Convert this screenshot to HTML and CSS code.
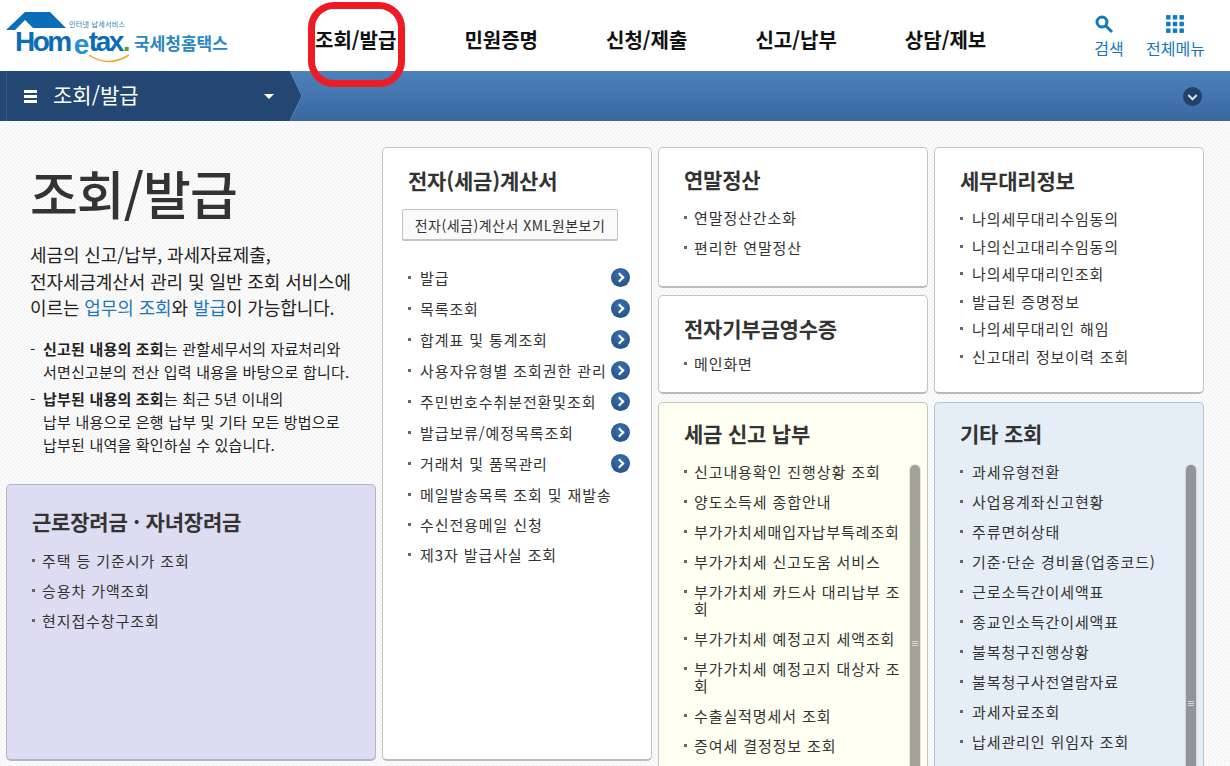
FILE: index.html
```html
<!DOCTYPE html>
<html lang="ko">
<head>
    <meta charset="UTF-8">
    <meta name="viewport" content="width=device-width, initial-scale=1.0">
    <title>조회/발급 - 국세청홈택스</title>
    <link rel="stylesheet" href="styles.css">
</head>
<body>
    <header class="header">
        <a class="logo" href="#">
            <svg class="logo-house" width="62" height="20" viewBox="0 0 62 20">
                <path d="M0 18 L19 0 H44 L60 16 H27 L19 8 L9 18 Z" fill="#0a6db5"/>
            </svg>
            <span class="logo-small">인터넷 납세서비스</span>
            <span class="logo-word">Hom<em>e</em>tax<i>.</i></span>
            <svg class="logo-smile" width="42" height="10" viewBox="0 0 42 10">
                <path d="M1 1 Q20 14 41 1" fill="none" stroke="#f0a531" stroke-width="1.5"/>
            </svg>
            <span class="logo-name">국세청홈택스</span>
        </a>
        <nav class="gnb">
            <a href="#">조회/발급</a>
            <a href="#">민원증명</a>
            <a href="#">신청/제출</a>
            <a href="#">신고/납부</a>
            <a href="#">상담/제보</a>
        </nav>
        <div class="tools">
            <a href="#">
                <svg class="tool-search" width="20" height="20" viewBox="0 0 20 20">
                    <circle cx="8" cy="8" r="5" fill="none" stroke="#1478bd" stroke-width="3"/>
                    <path d="M12 12 L18 18" stroke="#1478bd" stroke-width="3"/>
                </svg>
                검색
            </a>
            <a href="#">
                <svg width="20" height="20" viewBox="0 0 18 18" fill="#1478bd">
                    <rect x="1" y="1" width="4" height="4"/><rect x="7" y="1" width="4" height="4"/><rect x="13" y="1" width="4" height="4"/>
                    <rect x="1" y="7" width="4" height="4"/><rect x="7" y="7" width="4" height="4"/><rect x="13" y="7" width="4" height="4"/>
                    <rect x="1" y="13" width="4" height="4"/><rect x="7" y="13" width="4" height="4"/><rect x="13" y="13" width="4" height="4"/>
                </svg>
                전체메뉴
            </a>
        </div>
    </header>
    <div class="highlight"></div>

    <div class="locbar">
        <div class="loc-current">
            <span class="loc-burger"><i></i><i></i><i></i></span>
            <span class="loc-title">조회/발급</span>
            <span class="loc-caret"></span>
        </div>
        <svg class="loc-tip" width="13" height="50" viewBox="0 0 13 50">
            <path d="M0 0 L12 25 L0 50 Z" fill="#234673"/>
            <path d="M0 0 L12 25 L0 50" fill="none" stroke="#5b87bc" stroke-width="1"/>
        </svg>
        <span class="loc-more">
            <svg width="19" height="19" viewBox="0 0 18 18">
                <circle cx="9" cy="9" r="9" fill="#22406a"/>
                <path d="M5 7.5 L9 11.5 L13 7.5" fill="none" stroke="#d5dde6" stroke-width="2"/>
            </svg>
        </span>
    </div>

    <main class="content">
        <section class="intro-col">
            <div class="intro">
                <h1>조회/발급</h1>
                <p class="lead">세금의 신고/납부, 과세자료제출,<br>전자세금계산서 관리 및 일반 조회 서비스에<br>이르는 <span class="blue">업무의 조회</span>와 <span class="blue">발급</span>이 가능합니다.</p>
                <ul class="notes">
                    <li><b>신고된 내용의 조회</b>는 관할세무서의 자료처리와<br>서면신고분의 전산 입력 내용을 바탕으로 합니다.</li>
                    <li><b>납부된 내용의 조회</b>는 최근 5년 이내의<br>납부 내용으로 은행 납부 및 기타 모든 방법으로<br>납부된 내역을 확인하실 수 있습니다.</li>
                </ul>
            </div>
            <div class="card card-violet">
                <h2>근로장려금 · 자녀장려금</h2>
                <ul class="links">
                    <li>주택 등 기준시가 조회</li>
                    <li>승용차 가액조회</li>
                    <li>현지접수창구조회</li>
                </ul>
            </div>
        </section>

        <section class="card card-tall">
            <h2>전자(세금)계산서</h2>
            <button class="xml-btn" type="button">전자(세금)계산서 XML원본보기</button>
            <ul class="links links-arrow">
                <li class="has-arrow">발급<span class="arrow"></span></li>
                <li class="has-arrow">목록조회<span class="arrow"></span></li>
                <li class="has-arrow">합계표 및 통계조회<span class="arrow"></span></li>
                <li class="has-arrow">사용자유형별 조회권한 관리<span class="arrow"></span></li>
                <li class="has-arrow">주민번호수취분전환및조회<span class="arrow"></span></li>
                <li class="has-arrow">발급보류/예정목록조회<span class="arrow"></span></li>
                <li class="has-arrow">거래처 및 품목관리<span class="arrow"></span></li>
                <li>메일발송목록 조회 및 재발송</li>
                <li>수신전용메일 신청</li>
                <li>제3자 발급사실 조회</li>
            </ul>
        </section>

        <section class="stack">
            <div class="card card-year">
                <h2>연말정산</h2>
                <ul class="links">
                    <li>연말정산간소화</li>
                    <li>편리한 연말정산</li>
                </ul>
            </div>
            <div class="card card-donate">
                <h2>전자기부금영수증</h2>
                <ul class="links">
                    <li>메인화면</li>
                </ul>
            </div>
            <div class="card card-yellow">
                <h2>세금 신고 납부</h2>
                <ul class="links">
                    <li>신고내용확인 진행상황 조회</li>
                    <li>양도소득세 종합안내</li>
                    <li>부가가치세매입자납부특례조회</li>
                    <li>부가가치세 신고도움 서비스</li>
                    <li>부가가치세 카드사 대리납부 조회</li>
                    <li>부가가치세 예정고지 세액조회</li>
                    <li>부가가치세 예정고지 대상자 조회</li>
                    <li>수출실적명세서 조회</li>
                    <li>증여세 결정정보 조회</li>
                </ul>
                <div class="scroll-thumb"><span></span></div>
            </div>
        </section>

        <section class="stack">
            <div class="card card-agent">
                <h2>세무대리정보</h2>
                <ul class="links links-tight">
                    <li>나의세무대리수임동의</li>
                    <li>나의신고대리수임동의</li>
                    <li>나의세무대리인조회</li>
                    <li>발급된 증명정보</li>
                    <li>나의세무대리인 해임</li>
                    <li>신고대리 정보이력 조회</li>
                </ul>
            </div>
            <div class="card card-blue">
                <h2>기타 조회</h2>
                <ul class="links">
                    <li>과세유형전환</li>
                    <li>사업용계좌신고현황</li>
                    <li>주류면허상태</li>
                    <li>기준·단순 경비율(업종코드)</li>
                    <li>근로소득간이세액표</li>
                    <li>종교인소득간이세액표</li>
                    <li>불복청구진행상황</li>
                    <li>불복청구사전열람자료</li>
                    <li>과세자료조회</li>
                    <li>납세관리인 위임자 조회</li>
                </ul>
                <div class="scroll-thumb"><span></span></div>
            </div>
        </section>
    </main>
</body>
</html>
```

FILE: styles.css
```css
* {
    margin: 0;
    padding: 0;
    box-sizing: border-box;
    font-family: "Noto Sans CJK KR", "Noto Sans", sans-serif;
}

html, body {
    height: 766px;
    overflow: hidden;
}

body {
    position: relative;
    background: repeating-conic-gradient(#fbfbfb 0 25%, #f5f5f5 0 50%) 0 0 / 4px 4px;
    color: #333;
}

a {
    color: inherit;
    text-decoration: none;
}

ul {
    list-style: none;
}

.header {
    height: 71px;
    background: #fff;
    display: flex;
}

.logo {
    position: relative;
    width: 298px;
    flex: none;
}

.logo-house {
    position: absolute;
    left: 6px;
    top: 12px;
}

.logo-small {
    position: absolute;
    left: 69px;
    top: 20px;
    font-size: 7px;
    line-height: 9px;
    letter-spacing: 0.3px;
    color: #2a78b8;
}

.logo-word {
    position: absolute;
    left: 15px;
    top: 31px;
    font-family: "Liberation Sans", sans-serif;
    font-size: 28px;
    line-height: 22px;
    font-weight: 700;
    letter-spacing: -2.5px;
    color: #0a6db5;
}

.logo-word em {
    font-family: "Liberation Sans", sans-serif;
    font-style: normal;
    font-weight: 700;
    font-size: 28px;
    position: relative;
    top: 3px;
    margin: 0 2px 0 4px;
    color: #2391d2;
}

.logo-word i {
    font-family: "Liberation Sans", sans-serif;
    font-style: normal;
    margin-left: 1px;
    color: #4aa63c;
}

.logo-smile {
    position: absolute;
    left: 88px;
    top: 54px;
}

.logo-name {
    position: absolute;
    left: 134px;
    top: 32px;
    font-size: 17px;
    line-height: 22px;
    font-weight: 700;
    letter-spacing: 0;
    color: #2a86c4;
}

.gnb {
    display: flex;
    gap: 68px;
    padding: 26px 0 0 17px;
    width: 795px;
}

.gnb a {
    font-size: 20px;
    line-height: 28px;
    font-weight: 700;
    color: #111;
    white-space: nowrap;
}

.tools {
    display: flex;
    gap: 21px;
    padding-top: 14px;
}

.tools a {
    display: flex;
    flex-direction: column;
    align-items: center;
    gap: 4px;
    font-size: 16px;
    line-height: 20px;
    color: #1478bd;
}

.tools a:first-child {
    width: 32px;
}

.tool-search {
    margin-right: 10px;
}

.highlight {
    position: absolute;
    left: 308px;
    top: 2px;
    width: 97px;
    height: 85px;
    border: 7px solid #ed1c24;
    border-radius: 26px;
    z-index: 2;
}

.locbar {
    height: 50px;
    background: linear-gradient(#4d81bd, #3a689f);
    display: flex;
    align-items: center;
}

.loc-current {
    width: 290px;
    height: 50px;
    background: #234673;
    display: flex;
    align-items: center;
    padding-left: 24px;
    position: relative;
}

.loc-current::before {
    content: "";
    position: absolute;
    left: 6px;
    top: 0;
    width: 1px;
    height: 50px;
    background: #345a8c;
}

.loc-burger {
    display: flex;
    flex-direction: column;
    gap: 2px;
    margin-right: 16px;
}

.loc-burger i {
    display: block;
    width: 13px;
    height: 3px;
    background: #fff;
}

.loc-title {
    font-size: 21px;
    line-height: 28px;
    margin-top: -4px;
    color: #fff;
}

.loc-caret {
    position: absolute;
    left: 264px;
    top: 23px;
    border-top: 5px solid #fff;
    border-left: 5px solid transparent;
    border-right: 5px solid transparent;
}

.loc-tip {
    flex: none;
}

.loc-more {
    margin-left: auto;
    margin-right: 28px;
    height: 19px;
}

.content {
    display: flex;
    gap: 6px;
    padding: 26px 0 0 6px;
    width: 1230px;
}

.intro-col {
    width: 370px;
    flex: none;
}

.intro {
    height: 337px;
    padding: 11px 0 0 24px;
}

.intro h1 {
    font-size: 52px;
    line-height: 70px;
    font-weight: 500;
    letter-spacing: -1px;
    color: #333;
    margin-bottom: 13px;
}

.lead {
    font-size: 18px;
    line-height: 26.5px;
    letter-spacing: -0.1px;
    color: #222;
    margin-bottom: 16.5px;
}

.blue {
    color: #1f78bd;
}

.notes li {
    position: relative;
    padding-left: 13px;
    font-size: 15px;
    line-height: 23px;
    letter-spacing: 0.2px;
    color: #222;
    margin-bottom: 4px;
    white-space: nowrap;
}

.notes li::before {
    content: "-";
    position: absolute;
    left: 0;
    top: 0;
}

.notes b {
    font-weight: 700;
}

.card {
    position: relative;
    background: #fff;
    border: 1px solid #c4c4c4;
    border-bottom: 2px solid #bbb;
    border-radius: 5px;
    padding: 18px 0 0 25px;
    overflow: hidden;
}

.card h2 {
    font-size: 21px;
    line-height: 28px;
    font-weight: 700;
    letter-spacing: -0.2px;
    color: #333;
    margin-bottom: 15px;
}

.card-violet {
    height: 277px;
    background: #dddcf2;
    border-color: #b0b6c8;
    padding-top: 22px;
}

.card-violet h2 {
    margin-bottom: 17px;
}

.card-tall {
    width: 270px;
    height: 614px;
    flex: none;
}

.stack {
    width: 270px;
    flex: none;
    display: flex;
    flex-direction: column;
    gap: 7px;
}

.card-year {
    height: 141px;
    padding-top: 17px;
}

.card-year h2 {
    margin-bottom: 16px;
}

.card-donate {
    height: 99px;
}

.card-donate h2 {
    margin-bottom: 13px;
}

.card-agent {
    height: 247px;
}

.card-agent h2 {
    margin-bottom: 16px;
}

.stack .card-yellow,
.stack .card-blue {
    height: 400px;
    margin-top: 1px;
    padding-top: 16px;
}

.card-yellow h2,
.card-blue h2 {
    margin-bottom: 16px;
}

.card-yellow {
    background: #fffff2;
}

.card-blue {
    background: #e5edf6;
    border-color: #b3c3d6;
}

.links li {
    position: relative;
    padding: 0 20px 0 12px;
    font-size: 15px;
    line-height: 17px;
    letter-spacing: 0.9px;
    color: #333;
    margin-bottom: 13px;
}

.links li::before {
    content: "";
    position: absolute;
    left: 0;
    top: 7px;
    width: 3px;
    height: 3px;
    background: #666;
}

.stack .card-year li,
.stack .card-donate li,
.stack .card-yellow li,
.card-violet li {
    padding-left: 10px;
}

.links-tight li {
    margin-bottom: 10.5px;
}

.xml-btn {
    display: block;
    width: 216px;
    height: 32px;
    margin: 0 0 28px -6px;
    background: #fafafa;
    border: 1px solid #c4c4c4;
    border-bottom: 2px solid #c4c4c4;
    border-radius: 2px;
    font-size: 14px;
    letter-spacing: 0.5px;
    color: #333;
}

.links-arrow li {
    padding-right: 0;
    white-space: nowrap;
}

.links-arrow .has-arrow {
    margin-bottom: 14px;
}

.arrow {
    position: absolute;
    left: 203px;
    top: -1px;
    width: 19px;
    height: 19px;
    border-radius: 50%;
    background: radial-gradient(circle at 50% 35%, #3a72ad, #1f4a7c);
}

.arrow::after {
    content: "";
    position: absolute;
    left: 5px;
    top: 6px;
    width: 5px;
    height: 5px;
    border-top: 2px solid #fff;
    border-right: 2px solid #fff;
    transform: rotate(45deg);
}

.scroll-thumb {
    position: absolute;
    left: 251px;
    top: 62px;
    width: 10px;
    height: 340px;
    border-radius: 5px 5px 0 0;
    background: #a3a399;
    box-shadow: 0 0 0 1px rgba(170, 170, 160, 0.3);
}

.card-blue .scroll-thumb {
    background: #8f9598;
}

.scroll-thumb span {
    position: absolute;
    left: 2px;
    top: 176px;
    width: 6px;
    height: 6px;
    background: repeating-linear-gradient(#d5d5d5 0 1px, transparent 1px 2px);
}

.card-blue .scroll-thumb span {
    top: 236px;
}
```
